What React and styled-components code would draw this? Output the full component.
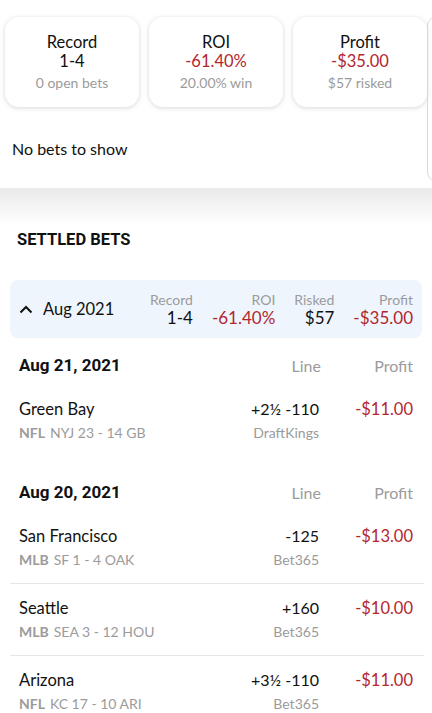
import React from 'react';
import styled, { createGlobalStyle } from 'styled-components';

const RED = '#b3262e';
const GRAY = '#9b9b9b';

const summary = [
  { title: 'Record', value: '1-4', note: '0 open bets' },
  { title: 'ROI', value: '-61.40%', note: '20.00% win', negative: true },
  { title: 'Profit', value: '-$35.00', note: '$57 risked', negative: true },
];

const monthStats = [
  { label: 'Record', value: '1-4' },
  { label: 'ROI', value: '-61.40%', negative: true },
  { label: 'Risked', value: '$57' },
  { label: 'Profit', value: '-$35.00', negative: true },
];

const days = [
  {
    date: 'Aug 21, 2021',
    bets: [
      { team: 'Green Bay', league: 'NFL', score: 'NYJ 23 - 14 GB', line: '+2½ -110', book: 'DraftKings', profit: '-$11.00' },
    ],
  },
  {
    date: 'Aug 20, 2021',
    bets: [
      { team: 'San Francisco', league: 'MLB', score: 'SF 1 - 4 OAK', line: '-125', book: 'Bet365', profit: '-$13.00' },
      { team: 'Seattle', league: 'MLB', score: 'SEA 3 - 12 HOU', line: '+160', book: 'Bet365', profit: '-$10.00' },
      { team: 'Arizona', league: 'NFL', score: 'KC 17 - 10 ARI', line: '+3½ -110', book: 'Bet365', profit: '-$11.00' },
    ],
  },
];

const App = () => {
  return (
    <Page>
      <GlobalStyle />
      <Carousel>
        <Panel>
          <CardRow>
            {summary.map((s) => (
              <SummaryCard key={s.title}>
                <CardTitle>{s.title}</CardTitle>
                <CardValue negative={s.negative}>{s.value}</CardValue>
                <CardNote>{s.note}</CardNote>
              </SummaryCard>
            ))}
          </CardRow>
          <EmptyText>No bets to show</EmptyText>
        </Panel>
        <PeekPanel />
      </Carousel>
      <Band />

      <SectionTitle>SETTLED BETS</SectionTitle>

      <MonthRow>
        <MonthName>
          <svg width="14" height="10" viewBox="0 0 14 10">
            <polyline points="1.5,8.5 7,3 12.5,8.5" fill="none" stroke="#111" strokeWidth="2" />
          </svg>
          Aug 2021
        </MonthName>
        <MonthStats>
          {monthStats.map((m) => (
            <Stat key={m.label}>
              <StatLabel>{m.label}</StatLabel>
              <StatValue negative={m.negative}>{m.value}</StatValue>
            </Stat>
          ))}
        </MonthStats>
      </MonthRow>

      {days.map((day) => (
        <DayGroup key={day.date}>
          <DayHeader>
            <DayDate>{day.date}</DayDate>
            <HeadLabel>Line</HeadLabel>
            <HeadLabel>Profit</HeadLabel>
          </DayHeader>
          {day.bets.map((bet, i) => (
            <BetRow key={bet.team} divided={i < day.bets.length - 1}>
              <BetMain>
                <TeamName>{bet.team}</TeamName>
                <SubLine>
                  <League>{bet.league}</League>
                  {bet.score}
                </SubLine>
              </BetMain>
              <BetLine>
                <LineValue>{bet.line}</LineValue>
                <SubLine>{bet.book}</SubLine>
              </BetLine>
              <BetProfit>{bet.profit}</BetProfit>
            </BetRow>
          ))}
        </DayGroup>
      ))}
    </Page>
  );
};

export default App;

const GlobalStyle = createGlobalStyle`
  body {
    margin: 0;
    background: #fff;
    font-family: Lato, "Noto Sans", sans-serif;
    color: #111;
  }
`;

const Page = styled.div`
  width: 432px;
  overflow: hidden;
`;

const Carousel = styled.div`
  display: flex;
  height: 188px;
  overflow: hidden;
`;

const Panel = styled.div`
  flex: 0 0 426px;
  padding: 17px 0 0 5px;
  box-sizing: border-box;
`;

const PeekPanel = styled.div`
  flex: 0 0 300px;
  margin-top: 16px;
  height: 166px;
  border: 1px solid #d8d8d8;
  border-radius: 10px;
  box-sizing: border-box;
`;

const CardRow = styled.div`
  display: flex;
  gap: 10px;
`;

const SummaryCard = styled.div`
  width: 134px;
  height: 90px;
  box-sizing: border-box;
  padding-top: 16px;
  border-radius: 14px;
  background: #fff;
  box-shadow: 0 1px 5px rgba(0, 0, 0, 0.16);
  text-align: center;
`;

const CardTitle = styled.div`
  font-size: 16.5px;
  line-height: 19px;
`;

const CardValue = styled.div`
  font-size: 16.5px;
  line-height: 19px;
  color: ${(p) => (p.negative ? RED : '#111')};
`;

const CardNote = styled.div`
  font-size: 14px;
  line-height: 24px;
  color: ${GRAY};
`;

const EmptyText = styled.div`
  margin: 32px 0 0 7px;
  font-size: 16px;
`;

const Band = styled.div`
  height: 38px;
  background: linear-gradient(#eaeaea, #ffffff);
`;

const SectionTitle = styled.div`
  padding: 4px 17px 0;
  font-family: Roboto, sans-serif;
  font-weight: 700;
  font-size: 16.5px;
  line-height: 20px;
`;

const MonthRow = styled.div`
  margin: 30px 10px 0;
  height: 58px;
  padding: 0 9px 0 9px;
  display: flex;
  align-items: center;
  justify-content: space-between;
  background: #eef5fc;
  border-radius: 8px;
`;

const MonthName = styled.div`
  display: flex;
  align-items: center;
  gap: 10px;
  font-size: 16.5px;
`;

const MonthStats = styled.div`
  display: flex;
  gap: 19px;
`;

const Stat = styled.div`
  text-align: right;
`;

const StatLabel = styled.div`
  font-size: 14px;
  line-height: 17px;
  color: ${GRAY};
`;

const StatValue = styled.div`
  font-size: 17px;
  line-height: 20px;
  color: ${(p) => (p.negative ? RED : '#111')};
`;

const DayGroup = styled.div`
  margin-top: 7px;
  & + & {
    margin-top: 15px;
  }
`;

const DayHeader = styled.div`
  height: 40px;
  padding: 0 19px;
  display: grid;
  grid-template-columns: 1fr auto 92px;
  align-items: center;
`;

const DayDate = styled.div`
  font-family: Roboto, sans-serif;
  font-weight: 700;
  font-size: 17px;
`;

const HeadLabel = styled.div`
  text-align: right;
  font-size: 16px;
  color: ${GRAY};
`;

const BetRow = styled.div`
  margin: 0 8px 0 10px;
  padding: 12px 11px 11px 9px;
  display: grid;
  grid-template-columns: 1fr auto 94px;
  align-items: start;
  border-bottom: 1px solid ${(p) => (p.divided ? '#e6e6e6' : 'transparent')};
`;

const BetMain = styled.div``;

const TeamName = styled.div`
  font-size: 16.5px;
  line-height: 24px;
`;

const SubLine = styled.div`
  font-size: 14px;
  line-height: 24px;
  color: ${GRAY};
`;

const League = styled.span`
  font-weight: 700;
  margin-right: 5px;
`;

const BetLine = styled.div`
  text-align: right;
`;

const LineValue = styled.div`
  font-size: 16px;
  line-height: 24px;
`;

const BetProfit = styled.div`
  text-align: right;
  font-size: 16.5px;
  line-height: 24px;
  color: ${RED};
`;
